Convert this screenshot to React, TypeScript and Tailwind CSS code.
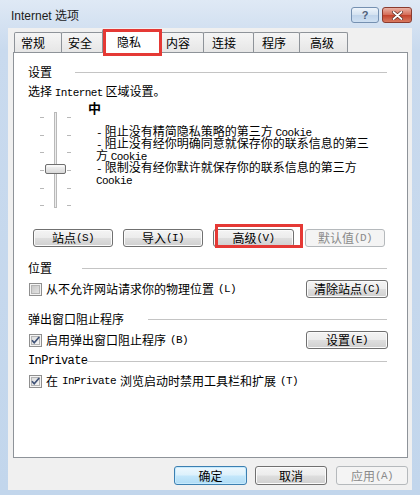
import React from "react";

const CJK = "font-['Noto_Sans_CJK_SC',sans-serif]";

function M({ children }: { children: React.ReactNode }) {
  return <span className="font-['Liberation_Mono',monospace] text-[11px] tracking-[-0.6px]">{children}</span>;
}

type BtnProps = { children: React.ReactNode; w: string; variant?: "normal" | "default" | "disabled"; h?: string };
function Btn({ children, w, variant = "normal", h = "h-[18px]" }: BtnProps) {
  let cls =
    "border-[#707070] bg-[linear-gradient(#f4f4f4,#ececec_48%,#dedede_52%,#d0d0d0)] text-black shadow-[inset_0_0_0_1px_#fbfbfb]";
  if (variant === "default")
    cls =
      "border-[#3c7fb1] bg-[linear-gradient(#eef8fe,#dcf1fc_48%,#c4e7fb_52%,#b0dcf5)] text-black shadow-[inset_0_0_0_1px_#c6eafd]";
  if (variant === "disabled") cls = "border-[#b5b9bc] bg-[#f4f4f4] text-[#8a8a8a]";
  return (
    <div className={`${w} ${h} shrink-0 rounded-[3px] border ${cls} flex items-center justify-center text-[12px] leading-[14px]`}>
      {children}
    </div>
  );
}

function Check({ checked, id }: { checked?: boolean; id: string }) {
  return (
    <svg width="13" height="13" viewBox="0 0 13 13" className="shrink-0">
      <defs>
        <linearGradient id={id} x1="0" y1="0" x2="1" y2="1">
          <stop offset="0" stopColor={checked ? "#dcdcdc" : "#c6c6c6"} />
          <stop offset="1" stopColor={checked ? "#f7f7f7" : "#e4e4e4"} />
        </linearGradient>
      </defs>
      <rect x="0.5" y="0.5" width="12" height="12" fill="#f4f4f4" stroke="#8f8f8f" />
      <rect x="2.5" y="2.5" width="8" height="8" fill={`url(#${id})`} stroke="#b4b4b4" />
      {checked && <path d="M3 6.3 L5.2 8.8 L10.2 3" stroke="#3f5277" strokeWidth="1.7" fill="none" />}
    </svg>
  );
}

function GroupHeader({ label, gap, mono }: { label: string; gap: string; mono?: boolean }) {
  return (
    <div className="flex h-[16px] items-center">
      <span className={`whitespace-nowrap text-[12px] leading-[16px] ${mono ? "font-['Liberation_Mono',monospace] text-[11px] tracking-[-0.6px]" : ""}`}>
        {label}
      </span>
      <div className={`${gap} h-0 flex-1 border-t border-[#c4c4c4] shadow-[0_1px_0_#ffffff]`} />
    </div>
  );
}

function Slider() {
  const ticks = [7, 25, 42, 60, 78, 95];
  return (
    <svg width="40" height="100" viewBox="0 0 40 100" className="shrink-0">
      <defs>
        <linearGradient id="thumb" x1="0" y1="0" x2="0" y2="1">
          <stop offset="0" stopColor="#f7f7f7" />
          <stop offset="1" stopColor="#d6d6d6" />
        </linearGradient>
      </defs>
      {ticks.map((y) => (
        <g key={y}>
          <line x1="4" y1={y + 0.5} x2="8" y2={y + 0.5} stroke="#b8b8b8" />
          <line x1="31" y1={y + 0.5} x2="35" y2={y + 0.5} stroke="#b8b8b8" />
        </g>
      ))}
      <rect x="18.5" y="2.5" width="2" height="95" fill="#ececec" stroke="#b9b9b9" />
      <rect x="9.5" y="54.5" width="20" height="9" rx="1.5" fill="url(#thumb)" stroke="#6f6f6f" />
      <line x1="11" y1="56" x2="28" y2="56" stroke="#ffffff" />
    </svg>
  );
}

const tabs = [
  { t: "常规", w: "w-[48px]", ml: "ml-[1px]", pl: "pl-[6px]" },
  { t: "安全", w: "w-[43px]", ml: "-ml-[1px]", pl: "pl-[6px]" },
];
const tabs2 = [
  { t: "内容", w: "w-[44px]", ml: "ml-0", pl: "pl-[5px]" },
  { t: "连接", w: "w-[51px]", ml: "-ml-[1px]", pl: "pl-[8px]" },
  { t: "程序", w: "w-[47px]", ml: "-ml-[1px]", pl: "pl-[8px]" },
  { t: "高级", w: "w-[49px]", ml: "-ml-[1px]", pl: "pl-[10px]" },
];

function Tab({ t, w, ml, pl }: { t: string; w: string; ml: string; pl: string }) {
  return (
    <div
      className={`${w} ${ml} ${pl} h-[20px] shrink-0 rounded-t-[2px] border border-b-0 border-[#8e9399] bg-[linear-gradient(#f5f5f5,#e6e6e6)] flex items-center text-[12px] leading-[14px]`}
    >
      {t}
    </div>
  );
}

export default function App() {
  return (
    <div className={`${CJK} w-[420px] h-[495px] overflow-hidden flex flex-col bg-[linear-gradient(#dfe9f5,#c9daee_10%,#c2d6ec)] text-black`}>
      {/* Title bar */}
      <div className="h-[28px] shrink-0 flex items-start">
        <div className="ml-[11px] mt-[7px] font-['Liberation_Sans',sans-serif] text-[12px] leading-[16px] text-[#1b1b1b]">
          Internet <span className={CJK}>选项</span>
        </div>
        <div className="ml-auto mr-[8px] mt-[7px] flex gap-[3px]">
          <div className="w-[28px] h-[16px] rounded-[3px] border border-[#7590b1] bg-[linear-gradient(#eef4fb,#d3e1f0_50%,#bfd3ea_50%,#cfe0f2)] flex items-center justify-center font-['Liberation_Sans',sans-serif] text-[11px] font-bold leading-none text-[#4d5f7a]">
            ?
          </div>
          <div className="w-[30px] h-[16px] rounded-[3px] border border-[#8a3b2f] bg-[linear-gradient(#eab2a5,#d46a55_50%,#c2402a_50%,#d97a60)] flex items-center justify-center">
            <svg width="11" height="9" viewBox="0 0 11 9">
              <path d="M1.5 1 L9.5 8 M9.5 1 L1.5 8" stroke="#5a2a22" strokeWidth="3.2" strokeLinecap="round" />
              <path d="M1.5 1 L9.5 8 M9.5 1 L1.5 8" stroke="#ffffff" strokeWidth="1.8" strokeLinecap="round" />
            </svg>
          </div>
        </div>
      </div>

      {/* Body */}
      <div className="flex-1 mx-[8px] mb-[5px] bg-[#f0f0f0] flex flex-col pl-[5px] pr-[4px]">
        {/* Tabs */}
        <div className="h-[24px] shrink-0 flex items-end relative z-10">
          {tabs.map((t) => (
            <Tab key={t.t} {...t} />
          ))}
          <div className="relative w-[60px] h-[24px] -mx-[2px] -mb-[1px] z-10 shrink-0 rounded-t-[2px] border border-b-0 border-[#8e9399] bg-white flex items-center pl-[14px] text-[12px] leading-[14px]">
            隐私
            <div className="absolute left-0 top-[-1px] w-[59px] h-[27px] border-[3px] border-[#e53935]" />
          </div>
          {tabs2.map((t) => (
            <Tab key={t.t} {...t} />
          ))}
        </div>

        {/* Panel */}
        <div className="h-[406px] shrink-0 border border-[#8e9399] bg-white flex flex-col pt-[11px] pl-[14px] pr-[20px]">
          <GroupHeader label="设置" gap="ml-[23px]" />
          <div className="mt-[3px] h-[16px] text-[12px] leading-[16px] whitespace-nowrap">
            选择 <M>Internet</M> 区域设置。
          </div>

          {/* Slider + description */}
          <div className="mt-[1px] h-[112px] flex">
            <div className="ml-[8px] mt-[10px]">
              <Slider />
            </div>
            <div className="ml-[12px] flex flex-col">
              <div className="h-[16px] text-[13px] leading-[16px] font-bold">中</div>
              <div className="mt-[9px] pl-[8px] text-[12px] leading-[12px] whitespace-nowrap flex flex-col">
                <div className="h-[12px]">
                  <M>-</M> 阻止没有精简隐私策略的第三方 <M>Cookie</M>
                </div>
                <div className="h-[12px]">
                  <M>-</M> 阻止没有经你明确同意就保存你的联系信息的第三
                </div>
                <div className="h-[12px]">
                  方 <M>Cookie</M>
                </div>
                <div className="h-[12px]">
                  <M>-</M> 限制没有经你默许就保存你的联系信息的第三方
                </div>
                <div className="h-[12px]">
                  <M>Cookie</M>
                </div>
              </div>
            </div>
          </div>

          {/* Buttons row */}
          <div className="relative mt-[17px] flex pl-[5px]">
            <Btn w="w-[80px]">
              站点<M>(S)</M>
            </Btn>
            <div className="ml-[10px]">
              <Btn w="w-[80px]">
                导入<M>(I)</M>
              </Btn>
            </div>
            <div className="ml-[10px]">
              <Btn w="w-[81px]">
                高级<M>(V)</M>
              </Btn>
            </div>
            <div className="ml-[11px]">
              <Btn w="w-[80px]" variant="disabled">
                默认值<M>(D)</M>
              </Btn>
            </div>
            <div className="absolute left-[187px] top-[-5px] w-[88px] h-[24px] border-[3px] border-[#e53935]" />
          </div>

          {/* 位置 */}
          <div className="mt-[13px]">
            <GroupHeader label="位置" gap="ml-[30px]" />
          </div>
          <div className="mt-[4px] h-[18px] flex items-center">
            <div className="ml-[1px] flex items-center gap-[4px] text-[12px] leading-[14px] whitespace-nowrap">
              <Check id="c1" />
              从不允许网站请求你的物理位置 <M>(L)</M>
            </div>
            <div className="ml-auto -mr-[1px]">
              <Btn w="w-[82px]">
                清除站点 <M>(C)</M>
              </Btn>
            </div>
          </div>

          {/* 弹出窗口阻止程序 */}
          <div className="mt-[13px]">
            <GroupHeader label="弹出窗口阻止程序" gap="ml-[24px]" />
          </div>
          <div className="mt-[4px] h-[18px] flex items-center">
            <div className="ml-[1px] flex items-center gap-[4px] text-[12px] leading-[14px] whitespace-nowrap">
              <Check id="c2" checked />
              启用弹出窗口阻止程序<M>(B)</M>
            </div>
            <div className="ml-auto -mr-[1px]">
              <Btn w="w-[82px]">
                设置<M>(E)</M>
              </Btn>
            </div>
          </div>

          {/* InPrivate */}
          <div className="mt-[4px]">
            <GroupHeader label="InPrivate" gap="ml-0" mono />
          </div>
          <div className="mt-[4px] h-[16px] flex items-center">
            <div className="ml-[1px] flex items-center gap-[4px] text-[12px] leading-[14px] whitespace-nowrap">
              <Check id="c3" checked />
              在 <M>InPrivate</M> 浏览启动时禁用工具栏和扩展<M>(T)</M>
            </div>
          </div>
        </div>

        {/* Bottom buttons */}
        <div className="mt-[8px] flex justify-end">
          <Btn w="w-[73px]" h="h-[19px]" variant="default">
            确定
          </Btn>
          <div className="ml-[8px]">
            <Btn w="w-[72px]" h="h-[19px]">
              取消
            </Btn>
          </div>
          <div className="ml-[9px]">
            <Btn w="w-[72px]" h="h-[19px]" variant="disabled">
              应用<M>(A)</M>
            </Btn>
          </div>
        </div>
      </div>
    </div>
  );
}
